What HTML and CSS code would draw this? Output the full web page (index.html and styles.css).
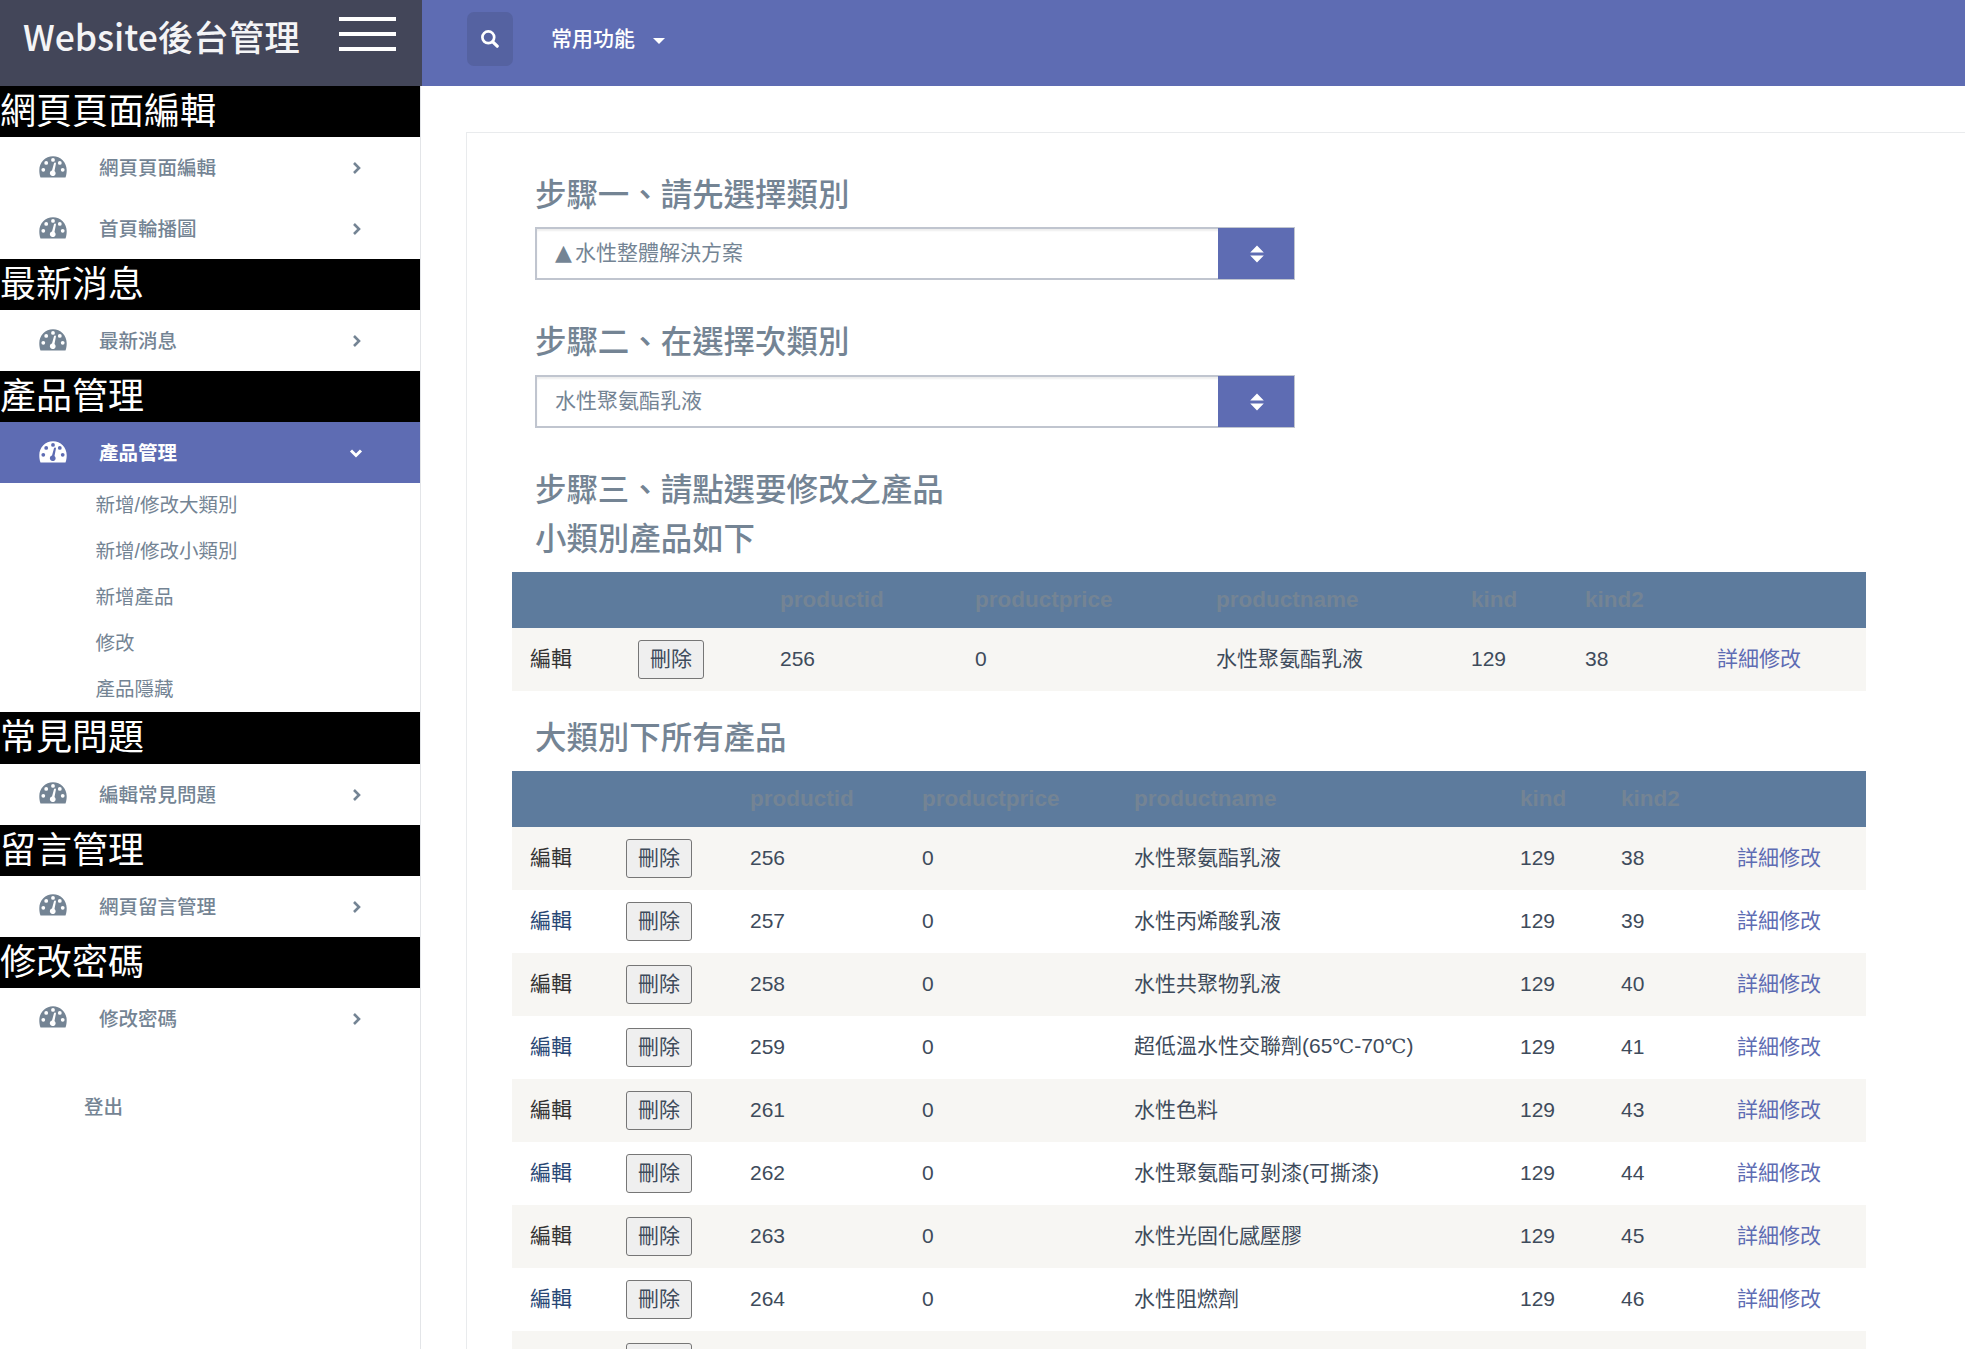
FILE: index.html
```html
<!DOCTYPE html>
<html lang="zh-Hant">
<head>
    <meta charset="UTF-8">
    <meta name="viewport" content="width=device-width, initial-scale=1.0">
    <title>Website後台管理</title>
    <link rel="stylesheet" href="styles.css">
</head>
<body>
    <svg class="symbols" xmlns="http://www.w3.org/2000/svg">
        <symbol id="icon-dash" viewBox="0 0 28 22">
            <path fill-rule="evenodd" d="M14 0.2C6.4 0.2 0.3 6.4 0.3 14c0 2.6.3 5.2 1.200 7.600h25c.9-2.400 1.200-5 1.200-7.600C27.700 6.400 21.600.2 14 .2zM14 2a1.900 1.900 0 1 1 0 3.800 1.900 1.900 0 0 1 0-3.800zM4.300 15.700a1.900 1.900 0 1 1 0-3.800 1.900 1.900 0 0 1 0 3.800zM7.200 8.800a1.900 1.900 0 1 1 0-3.800 1.900 1.900 0 0 1 0 3.800zM16.900 7.700l-1.400 7.200a2.900 2.900 0 1 1-2.500-.5l2-7.200c.4-1.300 2.200-.9 1.900.5zM20.800 8.800a1.900 1.900 0 1 1 0-3.800 1.900 1.900 0 0 1 0 3.800zM23.700 15.700a1.900 1.900 0 1 1 0-3.800 1.900 1.900 0 0 1 0 3.800z"/>
        </symbol>
        <symbol id="icon-right" viewBox="0 0 12 14">
            <path d="M3 2l5 5-5 5" fill="none" stroke="currentColor" stroke-width="2.6"/>
        </symbol>
        <symbol id="icon-down" viewBox="0 0 14 12">
            <path d="M2 3.5l5 5 5-5" fill="none" stroke="currentColor" stroke-width="3"/>
        </symbol>
    </svg>

    <header class="topbar">
        <div class="logo">
            <span class="logo-text">Website後台管理</span>
            <div class="hamburger"><span></span><span></span><span></span></div>
        </div>
        <button class="search-btn" type="button">
            <svg viewBox="0 0 18 18" width="18" height="18"><circle cx="7.3" cy="7.3" r="5.9" fill="none" stroke="#fff" stroke-width="2.7"/><path d="M11.8 11.8L16.2 16.2" stroke="#fff" stroke-width="3.2" stroke-linecap="round"/></svg>
        </button>
        <a class="top-menu">常用功能<span class="caret"></span></a>
    </header>

    <div class="page">
        <nav class="sidebar">
            <h2 class="nav-title">網頁頁面編輯</h2>
            <a class="nav-item"><svg class="dash"><use href="#icon-dash"/></svg><span>網頁頁面編輯</span><svg class="arrow"><use href="#icon-right"/></svg></a>
            <a class="nav-item"><svg class="dash"><use href="#icon-dash"/></svg><span>首頁輪播圖</span><svg class="arrow"><use href="#icon-right"/></svg></a>
            <h2 class="nav-title">最新消息</h2>
            <a class="nav-item"><svg class="dash"><use href="#icon-dash"/></svg><span>最新消息</span><svg class="arrow"><use href="#icon-right"/></svg></a>
            <h2 class="nav-title">產品管理</h2>
            <a class="nav-item active"><svg class="dash"><use href="#icon-dash"/></svg><span>產品管理</span><svg class="arrow-down"><use href="#icon-down"/></svg></a>
            <ul class="sub-menu">
                <li>新增/修改大類別</li>
                <li>新增/修改小類別</li>
                <li>新增產品</li>
                <li>修改</li>
                <li>產品隱藏</li>
            </ul>
            <h2 class="nav-title">常見問題</h2>
            <a class="nav-item"><svg class="dash"><use href="#icon-dash"/></svg><span>編輯常見問題</span><svg class="arrow"><use href="#icon-right"/></svg></a>
            <h2 class="nav-title">留言管理</h2>
            <a class="nav-item"><svg class="dash"><use href="#icon-dash"/></svg><span>網頁留言管理</span><svg class="arrow"><use href="#icon-right"/></svg></a>
            <h2 class="nav-title">修改密碼</h2>
            <a class="nav-item"><svg class="dash"><use href="#icon-dash"/></svg><span>修改密碼</span><svg class="arrow"><use href="#icon-right"/></svg></a>
            <a class="logout">登出</a>
        </nav>

        <main class="content">
            <div class="panel">
                <h3 class="step step-first">步驟一、請先選擇類別</h3>
                <div class="select-box">
                    <span class="select-text"><span class="mark">▲</span>水性整體解決方案</span>
                    <span class="select-btn"><svg viewBox="0 0 14 18" width="14" height="18"><path d="M7 0.5L13.800 7.600H0.200zM7 17.500L0.200 10.400h13.600z" fill="#fff"/></svg></span>
                </div>
                <h3 class="step">步驟二、在選擇次類別</h3>
                <div class="select-box">
                    <span class="select-text">水性聚氨酯乳液</span>
                    <span class="select-btn"><svg viewBox="0 0 14 18" width="14" height="18"><path d="M7 0.5L13.800 7.600H0.200zM7 17.500L0.200 10.400h13.600z" fill="#fff"/></svg></span>
                </div>
                <h3 class="step">步驟三、請點選要修改之產品</h3>
                <h3 class="step">小類別產品如下</h3>
                <table class="grid grid-small">
                    <colgroup><col class="c-edit"><col class="c-del"><col class="c-id"><col class="c-price"><col class="c-name"><col class="c-kind"><col class="c-kind2"><col></colgroup>
                    <tr><th></th><th></th><th>productid</th><th>productprice</th><th>productname</th><th>kind</th><th>kind2</th><th></th></tr>
                    <tr><td><a class="edit">編輯</a></td><td><button type="button">刪除</button></td><td>256</td><td>0</td><td>水性聚氨酯乳液</td><td>129</td><td>38</td><td><a class="detail">詳細修改</a></td></tr>
                </table>
                <h3 class="step step-all">大類別下所有產品</h3>
                <table class="grid grid-all">
                    <colgroup><col class="c-edit"><col class="c-del"><col class="c-id"><col class="c-price"><col class="c-name"><col class="c-kind"><col class="c-kind2"><col></colgroup>
                    <tr><th></th><th></th><th>productid</th><th>productprice</th><th>productname</th><th>kind</th><th>kind2</th><th></th></tr>
                    <tr><td><a class="edit">編輯</a></td><td><button type="button">刪除</button></td><td>256</td><td>0</td><td>水性聚氨酯乳液</td><td>129</td><td>38</td><td><a class="detail">詳細修改</a></td></tr>
                    <tr><td><a class="edit">編輯</a></td><td><button type="button">刪除</button></td><td>257</td><td>0</td><td>水性丙烯酸乳液</td><td>129</td><td>39</td><td><a class="detail">詳細修改</a></td></tr>
                    <tr><td><a class="edit">編輯</a></td><td><button type="button">刪除</button></td><td>258</td><td>0</td><td>水性共聚物乳液</td><td>129</td><td>40</td><td><a class="detail">詳細修改</a></td></tr>
                    <tr><td><a class="edit">編輯</a></td><td><button type="button">刪除</button></td><td>259</td><td>0</td><td>超低溫水性交聯劑(65<span class="deg">℃</span>-70<span class="deg">℃</span>)</td><td>129</td><td>41</td><td><a class="detail">詳細修改</a></td></tr>
                    <tr><td><a class="edit">編輯</a></td><td><button type="button">刪除</button></td><td>261</td><td>0</td><td>水性色料</td><td>129</td><td>43</td><td><a class="detail">詳細修改</a></td></tr>
                    <tr><td><a class="edit">編輯</a></td><td><button type="button">刪除</button></td><td>262</td><td>0</td><td>水性聚氨酯可剝漆(可撕漆)</td><td>129</td><td>44</td><td><a class="detail">詳細修改</a></td></tr>
                    <tr><td><a class="edit">編輯</a></td><td><button type="button">刪除</button></td><td>263</td><td>0</td><td>水性光固化感壓膠</td><td>129</td><td>45</td><td><a class="detail">詳細修改</a></td></tr>
                    <tr><td><a class="edit">編輯</a></td><td><button type="button">刪除</button></td><td>264</td><td>0</td><td>水性阻燃劑</td><td>129</td><td>46</td><td><a class="detail">詳細修改</a></td></tr>
                    <tr><td></td><td><button type="button"></button></td><td></td><td></td><td></td><td></td><td></td><td></td></tr>
                </table>
            </div>
        </main>
    </div>
</body>
</html>
```
FILE: styles.css
```css
* {
    box-sizing: border-box;
}
body {
    margin: 0;
    height: 1349px;
    overflow: hidden;
    background-color: #fff;
    color: #748494;
    font-family: "Liberation Sans", "Noto Sans CJK TC", sans-serif;
    font-size: 21px;
}
h2, h3, ul {
    margin: 0;
    padding: 0;
}
.symbols {
    display: none;
}

/* top bar */
.topbar {
    display: flex;
    align-items: flex-start;
    height: 86px;
    background-color: #5e6cb3;
}
.page {
    display: flex;
    height: 1263px;
}
.logo {
    display: flex;
    width: 422px;
    height: 86px;
    padding-left: 23px;
    background-color: #434659;
}
.logo-text {
    width: 316px;
    color: #f4f4f6;
    font-family: "Noto Sans CJK TC", sans-serif;
    font-size: 35.5px;
    font-weight: 500;
    line-height: 72px;
    white-space: nowrap;
}
.hamburger {
    display: flex;
    flex-direction: column;
    gap: 11px;
    width: 57px;
    padding-top: 17px;
}
.hamburger span {
    height: 4px;
    background-color: #fff;
}
.search-btn {
    display: flex;
    align-items: center;
    justify-content: center;
    width: 46px;
    height: 54px;
    margin: 12px 0 0 45px;
    padding: 0;
    border: none;
    border-radius: 7px;
    background-color: #5562a1;
}
.top-menu {
    display: flex;
    align-items: center;
    margin-left: 38px;
    color: #fff;
    font-weight: 500;
    line-height: 78px;
}
.caret {
    margin: 4px 0 0 18px;
    border-top: 6px solid #fff;
    border-left: 6px solid transparent;
    border-right: 6px solid transparent;
}

/* sidebar */
.sidebar {
    flex: none;
    width: 421px;
    border-right: 1px solid #e3e5e8;
    font-size: 19.5px;
}
.nav-title {
    height: 51.25px;
    background-color: #000;
    color: #fff;
    font-family: "Noto Sans CJK TC", sans-serif;
    font-size: 36px;
    font-weight: 400;
    line-height: 45px;
}
.nav-item {
    display: flex;
    align-items: center;
    height: 60.9px;
    padding-left: 38.5px;
    font-family: "Noto Sans CJK TC", sans-serif;
    font-weight: 500;
}
.nav-item span {
    width: 250px;
    margin: -2px 0 0 32.5px;
}
.dash {
    width: 28px;
    height: 22px;
    margin-top: -2px;
    fill: currentColor;
}
.arrow {
    width: 12px;
    height: 14px;
    margin: 1px 0 0 2px;
}
.arrow-down {
    width: 14px;
    height: 12px;
}
.nav-item.active {
    background-color: #5e6cb3;
    color: #fff;
    font-weight: 700;
}
.sub-menu {
    list-style: none;
}
.sub-menu li {
    height: 45.82px;
    padding-left: 95.5px;
    line-height: 45px;
}
.logout {
    display: block;
    margin-top: 34px;
    padding-left: 84px;
    font-family: "Noto Sans CJK TC", sans-serif;
    font-weight: 500;
    line-height: 46px;
}

/* content */
.content {
    flex: 1;
    padding: 46px 0 0 45px;
    overflow: hidden;
}
.panel {
    height: 1400px;
    padding: 37px 0 0 45px;
    border-top: 1px solid #e9ebed;
    border-left: 1px solid #e9ebed;
}
.step {
    height: 49px;
    padding-left: 23px;
    font-size: 31.45px;
    font-weight: 500;
    line-height: 49px;
}
.step-first {
    line-height: 51px;
}
.select-box {
    display: flex;
    width: 760px;
    height: 53px;
    margin: 8px 0 38px 23px;
    border: 2px solid #c0c5cf;
    border-right-width: 1px;
    box-shadow: inset 0 2px 2px #eee;
}
.select-text {
    flex: 1;
    padding-left: 18px;
    line-height: 47px;
}
.mark {
    display: inline-block;
    width: 20px;
    font-family: "DejaVu Sans", sans-serif;
    font-size: 22px;
    line-height: 24px;
}
.select-btn {
    display: flex;
    align-items: center;
    justify-content: center;
    width: 76px;
    margin: -1px 0;
    padding-left: 1px;
    background-color: #5e6cb3;
}

/* product tables */
.grid {
    width: 1354px;
    margin-top: 8px;
    border-collapse: collapse;
    table-layout: fixed;
    color: #3e4b5b;
    line-height: 24px;
}
.grid th, .grid td {
    padding: 0 0 0 18px;
    text-align: left;
}
.grid th {
    height: 56px;
    background-color: #5d7b9d;
    color: #748494;
    font-size: 22.5px;
}
.grid td {
    height: 63px;
    padding-bottom: 2px;
}
.grid tr:nth-child(even) {
    background-color: #f7f6f3;
}
.grid button {
    display: block;
    width: 66px;
    height: 39px;
    margin-bottom: -2px;
    padding: 0 0 2px;
    border: 1px solid #767676;
    border-radius: 3px;
    background-color: #efefef;
    color: #3e4b5b;
    font: inherit;
}
.edit {
    color: #284775;
}
.grid tr:nth-child(even) .edit {
    color: #333;
}
.detail {
    color: #5e6cb3;
}
.deg {
    font-family: "DejaVu Serif", serif;
    font-size: 19.5px;
}
.step-all {
    margin-top: 23px;
}
.grid-small .c-edit { width: 108px; }
.grid-small .c-del { width: 142px; }
.grid-small .c-id { width: 195px; }
.grid-small .c-price { width: 241px; }
.grid-small .c-name { width: 255px; }
.grid-small .c-kind { width: 114px; }
.grid-small .c-kind2 { width: 132px; }
.grid-all .c-edit { width: 96px; }
.grid-all .c-del { width: 124px; }
.grid-all .c-id { width: 172px; }
.grid-all .c-price { width: 212px; }
.grid-all .c-name { width: 386px; }
.grid-all .c-kind { width: 101px; }
.grid-all .c-kind2 { width: 116px; }
```
